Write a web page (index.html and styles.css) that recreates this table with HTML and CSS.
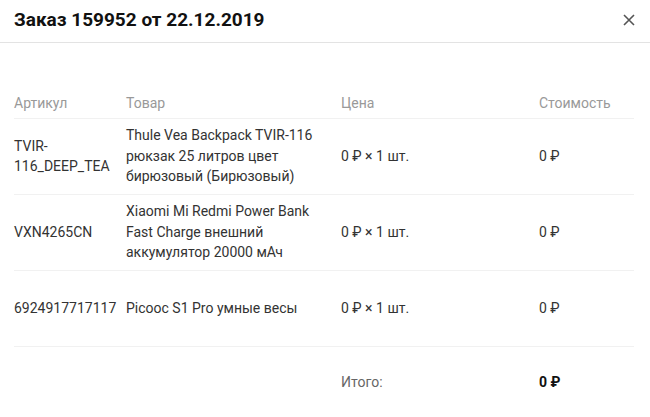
FILE: index.html
```html
<!DOCTYPE html>
<html lang="ru">
<head>
<meta charset="utf-8">
<link rel="stylesheet" href="styles.css">
</head>
<body>
<div class="modal">
  <div class="modal-head">
    <h1 class="title">Заказ 159952 от 22.12.2019</h1>
    <button class="close" aria-label="Закрыть">
      <svg width="12" height="12" viewBox="0 0 12 12"><path d="M1 1L11 11M11 1L1 11" stroke="#555" stroke-width="1.6" fill="none"/></svg>
    </button>
  </div>
  <div class="table">
    <div class="row head">
      <div>Артикул</div><div>Товар</div><div>Цена</div><div>Стоимость</div>
    </div>
    <div class="row item">
      <div>TVIR-116_DEEP_TEA</div>
      <div>Thule Vea Backpack TVIR-116 рюкзак 25 литров цвет бирюзовый (Бирюзовый)</div>
      <div>0 ₽ × 1 шт.</div>
      <div>0 ₽</div>
    </div>
    <div class="row item">
      <div>VXN4265CN</div>
      <div>Xiaomi Mi Redmi Power Bank Fast Charge внешний аккумулятор 20000 мАч</div>
      <div>0 ₽ × 1 шт.</div>
      <div>0 ₽</div>
    </div>
    <div class="row item">
      <div>6924917717117</div>
      <div>Picooc S1 Pro умные весы</div>
      <div>0 ₽ × 1 шт.</div>
      <div>0 ₽</div>
    </div>
    <div class="row total">
      <div></div><div></div><div class="total-label">Итого:</div><div class="total-sum">0 ₽</div>
    </div>
  </div>
</div>
</body>
</html>
```
FILE: styles.css
```css
* { box-sizing: border-box; }
html, body { margin: 0; padding: 0; background: #fff; }
body { font-family: Roboto, "Noto Sans", sans-serif; color: #333; width: 650px; height: 417px; overflow: hidden; }
.modal { width: 650px; }
.modal-head {
  height: 43px;
  border-bottom: 1px solid #e3e3e3;
  display: flex;
  align-items: center;
  justify-content: space-between;
  padding: 0 14px 3px 14px;
}
.title { margin: 0; font-size: 19px; font-weight: 700; color: #111; letter-spacing: 0; }
.close { border: 0; background: none; padding: 0; width: 12px; height: 12px; display: flex; margin-right: 1px; }
.table { margin: 0 16px 0 14px; padding-top: 50px; font-size: 14px; line-height: 20.5px; }
.row {
  display: grid;
  grid-template-columns: 112px 215px 198px 1fr;
  align-items: center;
  border-bottom: 1px solid #f1f1f1;
}
.row > div { padding-right: 12px; }
.head { color: #999; padding-bottom: 4px; }
.item { height: 76px; }
.total { height: 72px; border-bottom: 0; }
.total-label { color: #666; }
.total-sum { font-weight: 700; color: #111; }
```
